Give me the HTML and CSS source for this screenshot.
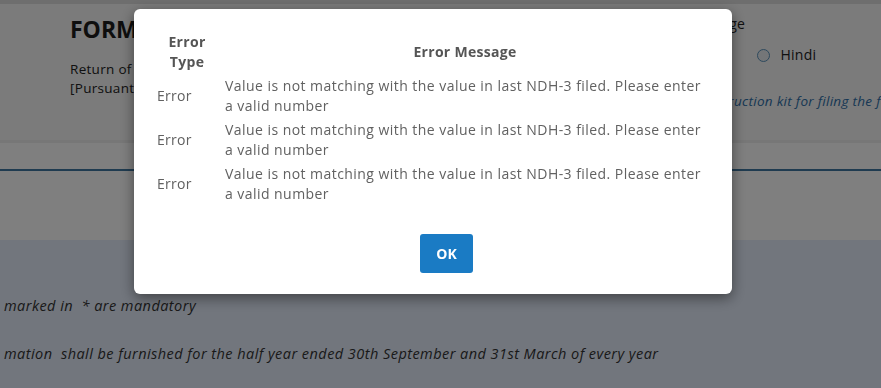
FILE: index.html
```html
<!DOCTYPE html>
<html lang="en">
<head>
<meta charset="utf-8">
<title>Form NDH-3</title>
<link rel="stylesheet" href="styles.css">
</head>
<body>
<div class="page">
  <div class="topstrip"></div>
  <header class="form-head">
    <div class="head-left">
      <h1 class="form-title">FORM NDH-3</h1>
      <p class="form-sub">Return of Nidhi Company for the half year ended<br>[Pursuant to first proviso to rule 21 of the Nidhi Rules, 2014]</p>
    </div>
    <div class="head-right">
      <div class="lang-label">Form language</div>
      <div class="lang-opts">
        <label class="radio"><span class="radio-dot"></span>English</label>
        <label class="radio"><span class="radio-dot"></span>Hindi</label>
      </div>
      <a class="kit-link">Refer the instruction kit for filing the form.</a>
    </div>
  </header>
  <div class="band"></div>
  <div class="tabline"></div>
  <div class="plain"></div>
  <section class="notes">
    <p class="note note-1">marked in&nbsp; * are mandatory</p>
    <p class="note note-2">mation&nbsp; shall be furnished for the half year ended 30th September and 31st March of every year</p>
  </section>
</div>

<div class="overlay"></div>

<div class="modal" role="dialog">
  <table class="err-table">
    <thead>
      <tr>
        <th class="col-type">Error<br>Type</th>
        <th class="col-msg">Error Message</th>
      </tr>
    </thead>
    <tbody>
      <tr>
        <td class="col-type">Error</td>
        <td class="col-msg">Value is not matching with the value in last NDH-3 filed. Please enter a valid number</td>
      </tr>
      <tr>
        <td class="col-type">Error</td>
        <td class="col-msg">Value is not matching with the value in last NDH-3 filed. Please enter a valid number</td>
      </tr>
      <tr>
        <td class="col-type">Error</td>
        <td class="col-msg">Value is not matching with the value in last NDH-3 filed. Please enter a valid number</td>
      </tr>
    </tbody>
  </table>
  <div class="modal-foot">
    <button class="ok-btn" type="button">OK</button>
  </div>
</div>
</body>
</html>
```

FILE: styles.css
```css
* { box-sizing: border-box; }

html, body {
  margin: 0;
  padding: 0;
}

body {
  width: 881px;
  height: 388px;
  overflow: hidden;
  font-family: "Open Sans", "DejaVu Sans", sans-serif;
  background: #e6e6e6;
  color: #222;
}

.page {
  display: flex;
  flex-direction: column;
  height: 388px;
}

.topstrip {
  height: 4px;
  background: #dcdcdc;
}

.form-head {
  height: 136px;
  background: #f6f6f6;
  display: flex;
  justify-content: space-between;
  padding: 0 0 0 70px;
}

.form-title {
  margin: 10px 0 0 0;
  font-size: 23px;
  line-height: 30px;
  font-weight: 700;
  color: #1c1c1c;
}

.form-sub {
  margin: 16px 0 0 0;
  font-size: 13.5px;
  letter-spacing: 0.3px;
  line-height: 19px;
  color: #222;
}

.head-right {
  width: 231px;
  padding-top: 10px;
  font-size: 14px;
  letter-spacing: 0.3px;
  color: #222;
}

.lang-label {
  line-height: 20px;
  margin-left: -6px;
}

.lang-opts {
  display: flex;
  gap: 30px;
  margin-top: 11px;
  margin-left: 6px;
  line-height: 20px;
}

.radio {
  display: flex;
  align-items: center;
  gap: 10px;
}

.radio-dot {
  width: 13px;
  height: 13px;
  border: 1px solid #5c93bb;
  border-radius: 50%;
  background: #e8ecf0;
}

.kit-link {
  display: block;
  margin-top: 27px;
  margin-left: -4px;
  white-space: nowrap;
  font-size: 13.5px;
  font-style: italic;
  color: #2e6fa8;
}

.band {
  height: 29px;
  background: #ffffff;
  border-top: 3px solid #eeeeee;
}

.tabline {
  height: 2px;
  background: #3f77a0;
}

.plain {
  height: 69px;
  background: #fefefe;
}

.notes {
  flex: 1;
  background: #e4ecfa;
  padding: 0 0 0 4px;
}

.note {
  margin: 0;
  font-size: 14.5px;
  letter-spacing: 0.45px;
  font-style: italic;
  color: #333;
  line-height: 20px;
  white-space: nowrap;
}

.note-1 { margin-top: 56px; }
.note-2 { margin-top: 28px; }

.overlay {
  position: fixed;
  inset: 0;
  background: rgba(0, 0, 0, 0.5);
}

.modal {
  position: fixed;
  left: 134px;
  top: 9px;
  width: 598px;
  height: 285px;
  background: #fff;
  border-radius: 6px;
  box-shadow: 0 4px 14px rgba(0, 0, 0, 0.45);
  padding: 23px 20px 0 15px;
  font-family: "Open Sans", "DejaVu Sans", sans-serif;
  color: #616161;
}

.err-table {
  border-collapse: collapse;
  font-size: 14px;
  letter-spacing: 0.45px;
}

.err-table th,
.err-table td {
  padding: 0 4px;
  line-height: 20px;
  vertical-align: middle;
}

.err-table th {
  font-weight: 700;
  color: #555;
  text-align: center;
  padding-bottom: 4px;
  letter-spacing: 0.3px;
}

.err-table td {
  padding-bottom: 4px;
}

.err-table .col-type {
  width: 72px;
  padding-left: 8px;
}

.err-table td.col-type {
  text-align: left;
  letter-spacing: 0.3px;
}

.err-table .col-msg {
  width: 488px;
}

.modal-foot {
  display: flex;
  justify-content: center;
  padding-left: 32px;
  margin-top: 26px;
}

.ok-btn {
  width: 53px;
  height: 39px;
  border: none;
  border-radius: 3px;
  background: #1a7bc4;
  color: #fff;
  font-family: inherit;
  font-size: 14px;
  font-weight: 700;
}
```
